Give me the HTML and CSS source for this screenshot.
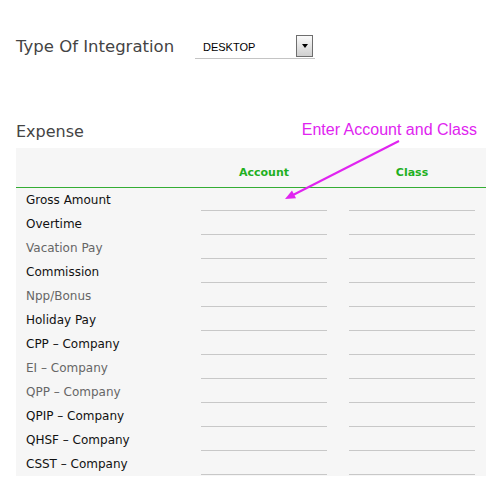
FILE: index.html
```html
<!DOCTYPE html>
<html lang="en">
<head>
    <meta charset="UTF-8">
    <meta name="viewport" content="width=device-width, initial-scale=1.0">
    <title>Expense Mapping</title>
    <link rel="stylesheet" href="styles.css">
</head>
<body>
<div class="page">
    <div class="integration">
        <label class="integration-label">Type Of Integration</label>
        <div class="select">
            <span class="select-value">DESKTOP</span>
            <span class="select-btn"><span class="caret"></span></span>
        </div>
    </div>

    <div class="expense-head">
        <h2>Expense</h2>
        <span class="note">Enter Account and Class</span>
    </div>

    <div class="panel">
        <div class="grid head-row">
            <span></span>
            <span class="col-title">Account</span>
            <span class="col-title">Class</span>
        </div>
        <div class="grid row"><span class="label">Gross Amount</span><span class="field"></span><span class="field"></span></div>
        <div class="grid row"><span class="label">Overtime</span><span class="field"></span><span class="field"></span></div>
        <div class="grid row"><span class="label muted">Vacation Pay</span><span class="field"></span><span class="field"></span></div>
        <div class="grid row"><span class="label">Commission</span><span class="field"></span><span class="field"></span></div>
        <div class="grid row"><span class="label muted">Npp/Bonus</span><span class="field"></span><span class="field"></span></div>
        <div class="grid row"><span class="label">Holiday Pay</span><span class="field"></span><span class="field"></span></div>
        <div class="grid row"><span class="label">CPP – Company</span><span class="field"></span><span class="field"></span></div>
        <div class="grid row"><span class="label muted">EI – Company</span><span class="field"></span><span class="field"></span></div>
        <div class="grid row"><span class="label muted">QPP – Company</span><span class="field"></span><span class="field"></span></div>
        <div class="grid row"><span class="label">QPIP – Company</span><span class="field"></span><span class="field"></span></div>
        <div class="grid row"><span class="label">QHSF – Company</span><span class="field"></span><span class="field"></span></div>
        <div class="grid row"><span class="label">CSST – Company</span><span class="field"></span><span class="field"></span></div>
    </div>

    <!-- annotation arrow -->
    <svg class="arrow" width="502" height="502" viewBox="0 0 502 502">
        <line x1="399" y1="141" x2="293" y2="195" stroke="#e024f0" stroke-width="2"/>
        <polygon points="285,199 296,198.3 292,190.6" fill="#e024f0"/>
    </svg>
</div>
</body>
</html>
```

FILE: styles.css
```css
/* Expense mapping page */
body {
    margin: 0;
    background-color: #fff;
    font-family: "DejaVu Sans", sans-serif;
}

.page {
    position: relative;
    width: 502px;
    height: 502px;
    padding: 35px 16px 0 16px;
    box-sizing: border-box;
}

.integration {
    display: flex;
    align-items: center;
}

.integration-label {
    width: 179px;
    font-size: 16.5px;
    line-height: 20px;
    color: #444;
}

.select {
    width: 120px;
    height: 23px;
    border-bottom: 1px solid #c4c4c4;
    display: flex;
    align-items: flex-start;
    justify-content: space-between;
    font-family: "Liberation Sans", Arial, sans-serif;
    font-size: 11px;
}

.select-value {
    padding: 6px 0 0 8px;
    color: #000;
}

.select-btn {
    width: 15px;
    height: 20px;
    margin-right: 2px;
    border: 1px solid #6e6e6e;
    background: linear-gradient(#fafafa, #cfcfcf);
    display: flex;
    align-items: center;
    justify-content: center;
}

.caret {
    width: 0;
    height: 0;
    border-left: 3.5px solid transparent;
    border-right: 3.5px solid transparent;
    border-top: 4px solid #000;
}

.expense-head {
    margin-top: 61px;
    display: flex;
    justify-content: space-between;
    align-items: flex-end;
    padding-right: 9px;
}

.expense-head h2 {
    margin: 0;
    font-size: 16px;
    line-height: 20px;
    font-weight: normal;
    color: #444;
}

.note {
    margin-bottom: 2px;
    font-family: "Liberation Sans", Arial, sans-serif;
    font-size: 16px;
    line-height: 20px;
    color: #e024f0;
}

.panel {
    margin-top: 6px;
    background-color: #f6f6f6;
}

.grid {
    display: grid;
    grid-template-columns: 1fr 126px 126px;
    column-gap: 22px;
    padding: 0 11px 0 10px;
}

.head-row {
    padding-top: 18px;
    padding-bottom: 7px;
    border-bottom: 1px solid #34ad34;
}

.col-title {
    text-align: center;
    font-size: 11px;
    line-height: 14px;
    font-weight: bold;
    color: #1fb01f;
}

.row {
    height: 24px;
}

.label {
    font-size: 12px;
    line-height: 24px;
    color: #111;
}

.label.muted {
    color: #666;
}

.field {
    height: 22px;
    border-bottom: 1px solid #c8c8c8;
}

.arrow {
    position: absolute;
    left: 0;
    top: 0;
    pointer-events: none;
}
```
